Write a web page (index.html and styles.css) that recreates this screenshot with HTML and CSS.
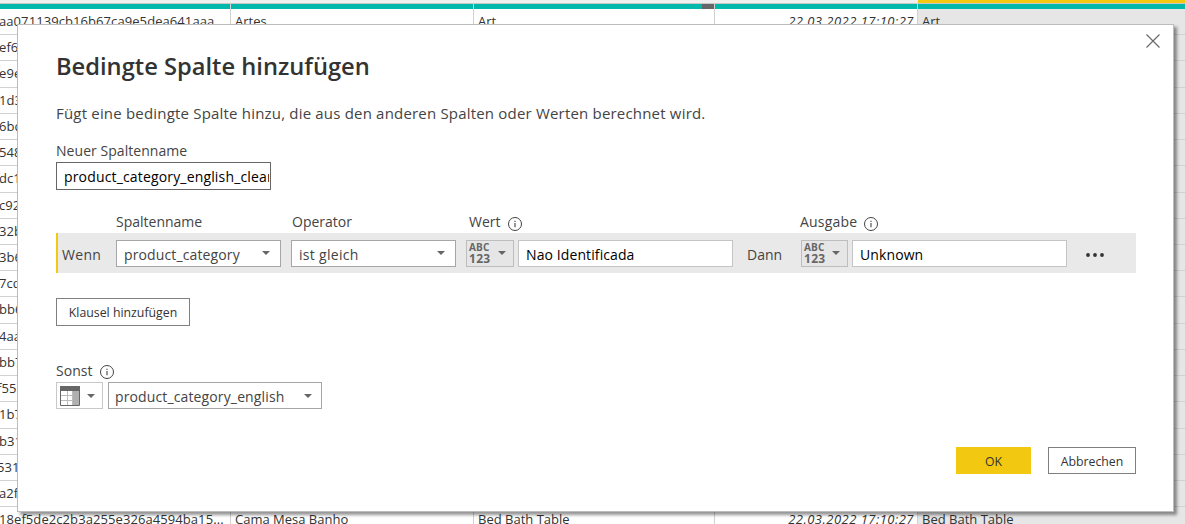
FILE: index.html
```html
<!DOCTYPE html>
<html lang="de">
<head>
<meta charset="utf-8">
<title>Bedingte Spalte hinzufügen</title>
<link rel="stylesheet" href="styles.css">
</head>
<body>
<svg class="defs" width="0" height="0">
  <symbol id="info" viewBox="0 0 14 14"><circle cx="7" cy="7" r="6.5" fill="none" stroke="#444" stroke-width="1"/><path d="M7 6v4.2M7 3.7v1.2" stroke="#444" stroke-width="1.1" fill="none"/></symbol>
  <symbol id="caret" viewBox="0 0 8 4"><path d="M0 0h8L4 4z" fill="#666"/></symbol>
</svg>
<div class="grid">
  <div class="quality">
    <div></div><div></div><div class="with-empty"></div><div></div><div class="selected"></div>
  </div>
  <div class="row first"><div class="id">aa071139cb16b67ca9e5dea641aaa</div><div>Artes</div><div>Art</div><div class="date">22.03.2022 17:10:27</div><div class="selected">Art</div></div>
  <div class="row"><div class="id">ef6</div><div></div><div></div><div></div><div class="selected"></div></div>
  <div class="row"><div class="id">e9e</div><div></div><div></div><div></div><div class="selected"></div></div>
  <div class="row"><div class="id">1d3</div><div></div><div></div><div></div><div class="selected"></div></div>
  <div class="row"><div class="id">6bd</div><div></div><div></div><div></div><div class="selected"></div></div>
  <div class="row"><div class="id">548</div><div></div><div></div><div></div><div class="selected"></div></div>
  <div class="row"><div class="id">dc1</div><div></div><div></div><div></div><div class="selected"></div></div>
  <div class="row"><div class="id">c92</div><div></div><div></div><div></div><div class="selected"></div></div>
  <div class="row"><div class="id">32b</div><div></div><div></div><div></div><div class="selected"></div></div>
  <div class="row"><div class="id">3b6</div><div></div><div></div><div></div><div class="selected"></div></div>
  <div class="row"><div class="id">7cd</div><div></div><div></div><div></div><div class="selected"></div></div>
  <div class="row"><div class="id">bb6</div><div></div><div></div><div></div><div class="selected"></div></div>
  <div class="row"><div class="id">4aa</div><div></div><div></div><div></div><div class="selected"></div></div>
  <div class="row"><div class="id">bb7</div><div></div><div></div><div></div><div class="selected"></div></div>
  <div class="row"><div class="id shifted">f55</div><div></div><div></div><div></div><div class="selected"></div></div>
  <div class="row"><div class="id">1b7</div><div></div><div></div><div></div><div class="selected"></div></div>
  <div class="row"><div class="id">b31</div><div></div><div></div><div></div><div class="selected"></div></div>
  <div class="row"><div class="id shifted">531</div><div></div><div></div><div></div><div class="selected"></div></div>
  <div class="row"><div class="id">a2f</div><div></div><div></div><div></div><div class="selected"></div></div>
  <div class="row"><div class="id">18ef5de2c2b3a255e326a4594ba15...</div><div>Cama Mesa Banho</div><div>Bed Bath Table</div><div class="date">22.03.2022 17:10:27</div><div class="selected">Bed Bath Table</div></div>
</div>

<div class="dialog">
  <svg class="close" width="14" height="14" viewBox="0 0 14 14"><path d="M.5.5l13 13M13.5.5l-13 13" stroke="#666" stroke-width="1.1"/></svg>
  <h1>Bedingte Spalte hinzufügen</h1>
  <p class="intro">Fügt eine bedingte Spalte hinzu, die aus den anderen Spalten oder Werten berechnet wird.</p>
  <div class="label">Neuer Spaltenname</div>
  <div class="field name-field"><span>product_category_english_clean</span></div>

  <div class="clause-grid labels">
    <span class="c-col">Spaltenname</span>
    <span class="c-op">Operator</span>
    <span class="c-val">Wert<svg class="info" width="14" height="14"><use href="#info"/></svg></span>
    <span class="c-out">Ausgabe<svg class="info" width="14" height="14"><use href="#info"/></svg></span>
  </div>
  <div class="clause-grid clause">
    <span class="word">Wenn</span>
    <div class="select c-col"><span>product_category</span><svg width="8" height="4"><use href="#caret"/></svg></div>
    <div class="select c-op"><span class="tight">ist gleich</span><svg width="8" height="4"><use href="#caret"/></svg></div>
    <div class="type off c-type"><div class="abc"><span>ABC</span><span class="digits">123</span></div><svg width="8" height="4"><use href="#caret"/></svg></div>
    <div class="field c-text"><span class="value">Nao Identificada</span></div>
    <span class="word c-then">Dann</span>
    <div class="type off c-out"><div class="abc"><span>ABC</span><span class="digits">123</span></div><svg width="8" height="4"><use href="#caret"/></svg></div>
    <div class="field c-result"><span class="value">Unknown</span></div>
    <svg class="dots" width="20" height="6" viewBox="0 0 20 6"><g fill="#333"><circle cx="3" cy="3" r="1.9"/><circle cx="10" cy="3" r="1.9"/><circle cx="17" cy="3" r="1.9"/></g></svg>
  </div>
  <div class="button add">Klausel hinzufügen</div>

  <div class="label else">Sonst<svg class="info" width="14" height="14"><use href="#info"/></svg></div>
  <div class="else-row">
    <div class="type"><svg class="table" width="20" height="20" viewBox="0 0 20 20"><path fill="#fff" d="M0 0h20v20H0z"/><path fill="#b0b0b0" d="M13 5h6v14h-6z"/><path d="M1 9.5h12M1 14.5h12M7.500 5v14M12.500 5v14" stroke="#bbb" fill="none"/><path d="M.5.5h19v19H.5z" fill="none" stroke="#666"/><path fill="#666" d="M0 0h20v5H0z"/></svg><svg width="8" height="4"><use href="#caret"/></svg></div>
    <div class="select"><span>product_category_english</span><svg width="8" height="4"><use href="#caret"/></svg></div>
  </div>
  <div class="actions">
    <div class="button ok">OK</div>
    <div class="button cancel">Abbrechen</div>
  </div>
</div>
</body>
</html>
```
FILE: styles.css
```css
* { box-sizing: border-box; }
body {
  margin: 0;
  width: 1185px;
  height: 524px;
  overflow: hidden;
  position: relative;
  background: #fff;
  color: #444;
  font-family: "Open Sans", "Noto Sans", sans-serif;
  font-size: 14px;
  white-space: nowrap;
}
.defs { position: absolute; }

.grid { height: 524px; overflow: hidden; color: #333; font-size: 13px; }
.quality, .row {
  display: grid;
  grid-template-columns: 231px 243px 241px 203px 267px;
}
.quality { height: 9px; background: #efefef; }
.quality > div {
  border-top: 1px solid #c8c8c8;
  border-right: 1px solid #d2d2d2;
  background: #01b8aa;
  background-clip: padding-box;
  margin-top: 3px;
}
.quality .with-empty { background: linear-gradient(90deg, #01b8aa 228px, #666 228px); background-clip: padding-box; }
.quality .selected { margin-top: 0; border-top: 3px solid #f2c811; border-right: 0; box-shadow: inset 0 1px #c8c8c8; }
.row { height: 26.222px; }
.row > div {
  border-right: 1px solid #d2d2d2;
  border-bottom: 1px solid #d2d2d2;
  padding-left: 4px;
  line-height: 25px;
  overflow: hidden;
  background: #fff;
}
.row > .id { padding-left: 0; text-indent: -1px; letter-spacing: .08px; }
.row > .shifted { text-indent: -3px; }
.row > .date { text-align: right; padding-right: 3px; font-style: italic; letter-spacing: .48px; }
.row > .selected { background: #e6e6e6; border-right: 0; }

.dialog {
  position: absolute;
  left: 17px;
  top: 24px;
  width: 1157px;
  height: 488px;
  padding: 25px 37px 0 38px;
  background: #fff;
  border: 1px solid #bcbcbc;
  box-shadow: 3px 3px 3px rgba(0, 0, 0, .42);
}
.close { position: absolute; right: 13px; top: 9px; }
h1 {
  margin: 0;
  height: 32px;
  line-height: 32px;
  font-size: 23.7px;
  font-weight: 600;
  color: #333;
}
.intro { margin: 20px 0 0; height: 22px; line-height: 22px; font-size: 15px; letter-spacing: .19px; }
.label { height: 20px; line-height: 20px; margin-top: 17px; letter-spacing: .05px; }
.field {
  border: 1px solid #c4c4c4;
  background: #fff;
  color: #000;
  padding: 0 7px;
  height: 27px;
  line-height: 27px;
  overflow: hidden;
  letter-spacing: .1px;
}
.name-field { width: 215px; height: 28px; margin-top: 1px; border-color: #666; padding: 0 1px 0 7px; letter-spacing: .16px; }
.name-field span { display: block; overflow: hidden; }
.info { margin-left: 7px; flex: none; }

.clause-grid {
  display: grid;
  grid-template-columns: 60px 165px 10px 165px 10px 48px 4px 215px 68px 47px 4px 215px 69px;
  grid-template-rows: 100%;
  width: 1080px;
}
.clause-grid > * { grid-row: 1; }
.labels { height: 22px; margin-top: 21px; line-height: 22px; }
.c-col { grid-column: 2; }
.c-op { grid-column: 4; }
.c-type { grid-column: 6; }
.c-val { grid-column: 6 / 9; padding-left: 3px; }
.c-text { grid-column: 8; }
.c-then { grid-column: 9; }
.c-out { grid-column: 10; }
.c-result { grid-column: 12; }
.labels .c-op { padding-left: 1px; }
.labels .c-out { grid-column: 10 / 13; margin-left: -1px; letter-spacing: .2px; }
.c-val, .labels .c-out, .else { display: flex; }
.labels .info { margin-top: 6px; }
.clause { height: 40px; background: #e9e9e9; border-left: 2px solid #f2c811; align-items: center; }
.clause.clause-grid { grid-template-columns: 58px 165px 10px 165px 10px 48px 4px 215px 68px 47px 4px 215px 69px; }
.word { padding-left: 4px; padding-top: 3px; letter-spacing: .3px; }
.c-then { padding-left: 14px; letter-spacing: 0; }
.select, .type {
  display: flex;
  align-items: center;
  justify-content: space-between;
  height: 27px;
  border: 1px solid #a6a6a6;
  background: #fff;
  padding: 0 10px 0 7px;
  letter-spacing: .13px;
}
.select > span { padding-top: 2px; }
.select > .tight { letter-spacing: .3px; }
.select svg, .type > svg:last-child { flex: none; }
.type { border-color: #c8c8c8; padding: 0 7px 0 3px; }
.type.off { background: #e6e6e6; border-color: #bdbdbd; padding-left: 2px; }
.abc {
  display: flex;
  flex-direction: column;
  font-size: 10px;
  line-height: 11px;
  font-weight: 700;
  letter-spacing: .2px;
  color: #666;
  margin-top: -1px;
}
.digits { font-size: 12px; letter-spacing: .3px; }
.dots { grid-column: 13; margin: 3px 0 0 18px; }
.button {
  display: flex;
  align-items: center;
  justify-content: center;
  height: 27px;
  border: 1px solid #7f7f7f;
  background: #fff;
  color: #333;
  font-size: 12.3px;
}
.add { width: 134px; height: 28px; margin-top: 25px; }
.else { margin-top: 35px; height: 20px; }
.else .info { margin-top: 4px; }
.else-row { display: flex; gap: 5px; margin-top: 1px; }
.else-row .type { width: 47px; }
.else-row .select { width: 214px; padding: 0 9px 0 6px; }
.actions { display: flex; justify-content: flex-end; gap: 17px; margin-top: 38px; }
.button.ok { width: 75px; background: #f2c811; border: 0; padding-top: 1px; }
.cancel { width: 88px; padding-top: 1px; }
```
